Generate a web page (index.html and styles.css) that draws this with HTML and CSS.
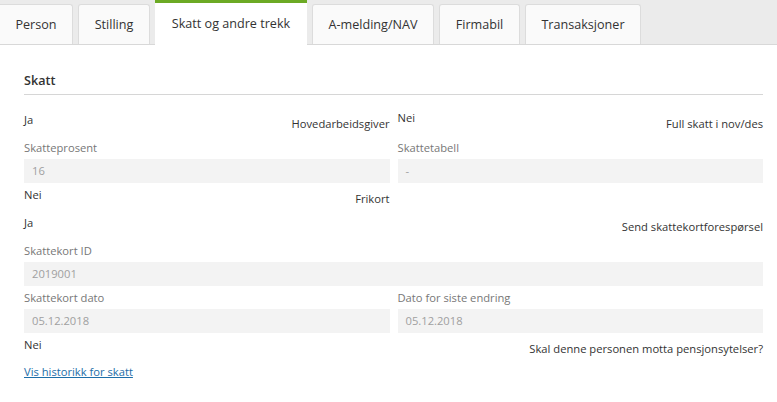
FILE: index.html
```html
<!DOCTYPE html>
<html lang="no">
<head>
  <meta charset="UTF-8">
  <meta name="viewport" content="width=device-width, initial-scale=1.0">
  <title>Skatt og andre trekk</title>
  <link rel="stylesheet" href="styles.css">
</head>
<body>
  <div class="tabs">
    <div class="tab tab-person">Person</div>
    <div class="tab tab-stilling">Stilling</div>
    <div class="tab tab-skatt active">Skatt og andre trekk</div>
    <div class="tab tab-amelding">A-melding/NAV</div>
    <div class="tab tab-firmabil">Firmabil</div>
    <div class="tab tab-trans">Transaksjoner</div>
  </div>

  <div class="content">
    <h2 class="section-title">Skatt</h2>

    <div class="form-grid">
      <div class="check-field">
        <span class="check-value">Ja</span>
        <span class="check-label">Hovedarbeidsgiver</span>
      </div>
      <div class="check-field check-field-right">
        <span class="check-value">Nei</span>
        <span class="check-label">Full skatt i nov/des</span>
      </div>

      <div class="field">
        <label>Skatteprosent</label>
        <div class="input">16</div>
      </div>
      <div class="field">
        <label>Skattetabell</label>
        <div class="input">-</div>
      </div>

      <div class="check-field">
        <span class="check-value">Nei</span>
        <span class="check-label">Frikort</span>
      </div>
      <div></div>

      <div class="check-field wide">
        <span class="check-value">Ja</span>
        <span class="check-label">Send skattekortforespørsel</span>
      </div>

      <div class="field wide">
        <label>Skattekort ID</label>
        <div class="input">2019001</div>
      </div>

      <div class="field">
        <label>Skattekort dato</label>
        <div class="input">05.12.2018</div>
      </div>
      <div class="field">
        <label>Dato for siste endring</label>
        <div class="input">05.12.2018</div>
      </div>

      <div class="check-field wide">
        <span class="check-value">Nei</span>
        <span class="check-label">Skal denne personen motta pensjonsytelser?</span>
      </div>
    </div>

    <a href="#" class="history-link">Vis historikk for skatt</a>
  </div>
</body>
</html>
```

FILE: styles.css
```css
body {
  margin: 0;
  padding: 0;
  font-family: "Open Sans", Arial, sans-serif;
  font-size: 11.2px;
  color: #333;
  background: #fff;
}

/* Tab bar */
.tabs {
  display: flex;
  gap: 5px;
  height: 40px;
  padding-top: 4px;
  background-color: #ebebeb;
  border-bottom: 1px solid #d8d8d8;
}

.tab {
  box-sizing: border-box;
  display: flex;
  align-items: center;
  justify-content: center;
  white-space: nowrap;
  font-size: 12.6px;
  color: #333;
  background-color: #fafafa;
  border: 1px solid #dcdcdc;
  border-bottom: none;
  border-radius: 3px 3px 0 0;
}

.tab-person {
  width: 73px;
  border-left: none;
  border-radius: 0 3px 0 0;
}

.tab-stilling { width: 72px; }
.tab-amelding { width: 122px; }
.tab-firmabil { width: 81px; }
.tab-trans { width: 116px; }

.tab.active {
  width: 152px;
  margin-top: -4px;
  margin-bottom: -1px;
  padding-bottom: 1px;
  background-color: #fff;
  border: none;
  border-top: 3px solid #6caa24;
  border-radius: 0;
}

/* Content */
.content {
  padding: 0 14px 0 24px;
}

.section-title {
  margin: 27px 0 0;
  padding-bottom: 4px;
  font-size: 12.6px;
  font-weight: 600;
  line-height: 18px;
  color: #333;
  border-bottom: 1px solid #d6d6d6;
}

.form-grid {
  display: grid;
  grid-template-columns: 1fr 1fr;
  column-gap: 8px;
  margin-top: 16px;
}

.wide {
  grid-column: 1 / -1;
}

.check-field {
  display: flex;
  justify-content: space-between;
  align-items: flex-start;
  height: 28px;
  line-height: 18px;
}

.check-value {
  color: #333;
}

.check-label {
  padding-top: 4px;
  color: #333;
}

.check-field-right .check-value {
  margin-top: -2px;
}

.field {
  display: flex;
  flex-direction: column;
  padding-bottom: 3px;
}

.field label {
  line-height: 18px;
  color: #777;
  margin-bottom: 2px;
}

.input {
  height: 24px;
  line-height: 24px;
  padding: 0 8px;
  background-color: #f3f3f3;
  color: #a0a0a0;
}

.history-link {
  display: inline-block;
  margin-top: -7px;
  line-height: 18px;
  color: #1d6ea8;
  text-decoration: underline;
}
```
